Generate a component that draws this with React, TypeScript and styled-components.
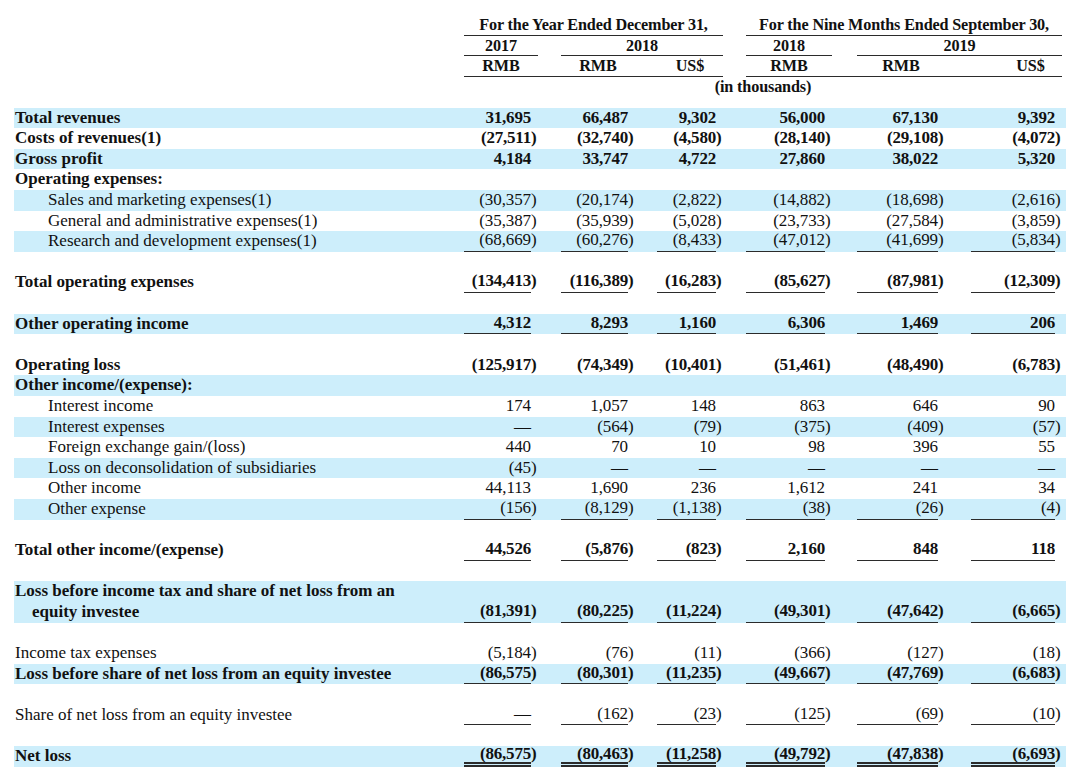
import styled, { createGlobalStyle } from "styled-components";

const GlobalStyle = createGlobalStyle`
	html, body {
		margin: 0;
		padding: 0;
		background: #ffffff;
	}
	body {
		font-family: "Liberation Serif", "Times New Roman", serif;
		color: #111111;
	}
`;

// label | (num, paren, spacer) x 6
const COLUMNS =
	"[label] 450px [n1] 67px [p1] 7px [s1] 23px [n2] 67px [p2] 7px [s2] 22px [n3] 59px [p3] 7px [s3] 23px [n4] 79px [p4] 7px [s4] 25px [n5] 81px [p5] 7px [s5] 26px [n6] 84px [p6] 7px [end] 4px";

const ROW_H = "20.6px";

type Kind = "bold" | "plain";
type Rule = "single" | "double";

type Line = {
	label?: string;
	second?: string;
	values?: string[];
	bold?: boolean;
	indent?: boolean;
	shaded?: boolean;
	rule?: Rule;
};

const rows: Line[] = [
	{ label: "Total revenues", bold: true, shaded: true, values: ["31,695", "66,487", "9,302", "56,000", "67,130", "9,392"] },
	{ label: "Costs of revenues(1)", bold: true, values: ["(27,511)", "(32,740)", "(4,580)", "(28,140)", "(29,108)", "(4,072)"] },
	{ label: "Gross profit", bold: true, shaded: true, values: ["4,184", "33,747", "4,722", "27,860", "38,022", "5,320"] },
	{ label: "Operating expenses:", bold: true },
	{ label: "Sales and marketing expenses(1)", indent: true, shaded: true, values: ["(30,357)", "(20,174)", "(2,822)", "(14,882)", "(18,698)", "(2,616)"] },
	{ label: "General and administrative expenses(1)", indent: true, values: ["(35,387)", "(35,939)", "(5,028)", "(23,733)", "(27,584)", "(3,859)"] },
	{ label: "Research and development expenses(1)", indent: true, shaded: true, rule: "single", values: ["(68,669)", "(60,276)", "(8,433)", "(47,012)", "(41,699)", "(5,834)"] },
	{},
	{ label: "Total operating expenses", bold: true, rule: "single", values: ["(134,413)", "(116,389)", "(16,283)", "(85,627)", "(87,981)", "(12,309)"] },
	{},
	{ label: "Other operating income", bold: true, shaded: true, rule: "single", values: ["4,312", "8,293", "1,160", "6,306", "1,469", "206"] },
	{},
	{ label: "Operating loss", bold: true, values: ["(125,917)", "(74,349)", "(10,401)", "(51,461)", "(48,490)", "(6,783)"] },
	{ label: "Other income/(expense):", bold: true, shaded: true },
	{ label: "Interest income", indent: true, values: ["174", "1,057", "148", "863", "646", "90"] },
	{ label: "Interest expenses", indent: true, shaded: true, values: ["—", "(564)", "(79)", "(375)", "(409)", "(57)"] },
	{ label: "Foreign exchange gain/(loss)", indent: true, values: ["440", "70", "10", "98", "396", "55"] },
	{ label: "Loss on deconsolidation of subsidiaries", indent: true, shaded: true, values: ["(45)", "—", "—", "—", "—", "—"] },
	{ label: "Other income", indent: true, values: ["44,113", "1,690", "236", "1,612", "241", "34"] },
	{ label: "Other expense", indent: true, shaded: true, rule: "single", values: ["(156)", "(8,129)", "(1,138)", "(38)", "(26)", "(4)"] },
	{},
	{ label: "Total other income/(expense)", bold: true, rule: "single", values: ["44,526", "(5,876)", "(823)", "2,160", "848", "118"] },
	{},
	{
		label: "Loss before income tax and share of net loss from an",
		second: "equity investee",
		bold: true,
		shaded: true,
		rule: "single",
		values: ["(81,391)", "(80,225)", "(11,224)", "(49,301)", "(47,642)", "(6,665)"],
	},
	{},
	{ label: "Income tax expenses", values: ["(5,184)", "(76)", "(11)", "(366)", "(127)", "(18)"] },
	{ label: "Loss before share of net loss from an equity investee", bold: true, shaded: true, rule: "single", values: ["(86,575)", "(80,301)", "(11,235)", "(49,667)", "(47,769)", "(6,683)"] },
	{},
	{ label: "Share of net loss from an equity investee", rule: "single", values: ["—", "(162)", "(23)", "(125)", "(69)", "(10)"] },
	{},
	{ label: "Net loss", bold: true, shaded: true, rule: "double", values: ["(86,575)", "(80,463)", "(11,258)", "(49,792)", "(47,838)", "(6,693)"] },
];

function splitParen(v: string) {
	if (v.endsWith(")")) return { num: v.slice(0, -1), paren: ")" };
	return { num: v, paren: "" };
}

// text sits a little higher in cells that carry a rule, so it clears the line
const ruleLine = (rule?: Rule) => (rule === "double" ? "16px" : rule === "single" ? "17px" : ROW_H);

function App() {
	return (
		<>
			<GlobalStyle />
			<Page>
				<Head>
					<HeadText $row={1} $from="n1" $to="s3" $rule>
						For the Year Ended December 31,
					</HeadText>
					<HeadText $row={1} $from="n4" $to="end" $rule>
						For the Nine Months Ended September 30,
					</HeadText>

					<HeadText $row={2} $from="n1" $to="s1" $rule>
						2017
					</HeadText>
					<HeadText $row={2} $from="n2" $to="s3" $rule>
						2018
					</HeadText>
					<HeadText $row={2} $from="n4" $to="s4" $rule>
						2018
					</HeadText>
					<HeadText $row={2} $from="n5" $to="end" $rule>
						2019
					</HeadText>

					<HeadRule $row={3} $from="n1" $to="s3" />
					<HeadRule $row={3} $from="n4" $to="end" />
					<HeadText $row={3} $from="n1" $to="s1">RMB</HeadText>
					<HeadText $row={3} $from="n2" $to="s2">RMB</HeadText>
					<HeadText $row={3} $from="n3" $to="s3">US$</HeadText>
					<HeadText $row={3} $from="n4" $to="s4">RMB</HeadText>
					<HeadText $row={3} $from="n5" $to="s5">RMB</HeadText>
					<HeadText $row={3} $from="n6" $to="end" $shift={28}>
						US$
					</HeadText>

					<HeadText $row={4} $from="n1" $to="end">
						(in thousands)
					</HeadText>
				</Head>

				<Body>
					{rows.map((r, i) => {
						const kind: Kind = r.bold ? "bold" : "plain";
						return (
							<Row key={i} $shaded={!!r.shaded} $tall={!!r.second}>
								{r.label && (
									<Label $kind={kind} $indent={!!r.indent}>
										{r.label}
										{r.second && <Wrapped>{r.second}</Wrapped>}
									</Label>
								)}
								{r.values?.map((v, j) => {
									const { num, paren } = splitParen(v);
									return [
										<Num key={"n" + j} $col={j + 1} $kind={kind} $rule={r.rule}>
											{num}
										</Num>,
										<Paren key={"p" + j} $col={j + 1} $kind={kind} $rule={r.rule}>
											{paren}
										</Paren>,
									];
								})}
							</Row>
						);
					})}
				</Body>
			</Page>
		</>
	);
}

export default App;

const Page = styled.div`
	width: 1080px;
	padding: 15px 0 0 14px;
	box-sizing: border-box;
`;

const Head = styled.div`
	display: grid;
	grid-template-columns: ${COLUMNS};
	grid-template-rows: repeat(4, ${ROW_H});
	font-weight: 700;
	font-size: 16.2px;
`;

const HeadText = styled.div<{ $row: number; $from: string; $to: string; $rule?: boolean; $shift?: number }>`
	grid-row: ${(p) => p.$row};
	grid-column: ${(p) => p.$from} / ${(p) => p.$to};
	text-align: center;
	line-height: ${ROW_H};
	white-space: nowrap;
	letter-spacing: -0.15px;
	padding-left: ${(p) => p.$shift ?? 0}px;
	border-bottom: ${(p) => (p.$rule ? "1.5px solid #2b2b2b" : "none")};
	box-sizing: border-box;
`;

const HeadRule = styled.div<{ $row: number; $from: string; $to: string }>`
	grid-row: ${(p) => p.$row};
	grid-column: ${(p) => p.$from} / ${(p) => p.$to};
	border-bottom: 1.5px solid #2b2b2b;
`;

const Body = styled.div`
	margin-top: 10.3px;
	width: 1052px;
`;

const Row = styled.div<{ $shaded: boolean; $tall: boolean }>`
	display: grid;
	grid-template-columns: ${COLUMNS};
	grid-template-rows: ${(p) => (p.$tall ? `${ROW_H} ${ROW_H}` : ROW_H)};
	background: ${(p) => (p.$shaded ? "#cdeefb" : "transparent")};
	font-size: 17px;
	line-height: ${ROW_H};
`;

const Label = styled.div<{ $kind: Kind; $indent: boolean }>`
	grid-column: label;
	grid-row: 1 / -1;
	display: flex;
	flex-direction: column;
	margin-left: -14px;
	padding-left: ${(p) => (p.$indent ? "48px" : "15px")};
	font-weight: ${(p) => (p.$kind === "bold" ? 700 : 400)};
	white-space: nowrap;
`;

const Wrapped = styled.span`
	padding-left: 17px;
`;

const Num = styled.div<{ $col: number; $kind: Kind; $rule?: Rule }>`
	grid-column: n${(p) => p.$col};
	grid-row: -2;
	box-sizing: border-box;
	height: ${ROW_H};
	text-align: right;
	font-weight: ${(p) => (p.$kind === "bold" ? 700 : 400)};
	letter-spacing: ${(p) => (p.$kind === "bold" ? "-0.2px" : "-0.1px")};
	white-space: nowrap;
	line-height: ${(p) => ruleLine(p.$rule)};
	border-bottom: ${(p) =>
		p.$rule === "double" ? "5px double #2b2b2b" : p.$rule === "single" ? "1.6px solid #2b2b2b" : "0 none"};
`;

const Paren = styled.div<{ $col: number; $kind: Kind; $rule?: Rule }>`
	grid-column: p${(p) => p.$col};
	grid-row: -2;
	font-weight: ${(p) => (p.$kind === "bold" ? 700 : 400)};
	white-space: nowrap;
	line-height: ${(p) => ruleLine(p.$rule)};
`;
